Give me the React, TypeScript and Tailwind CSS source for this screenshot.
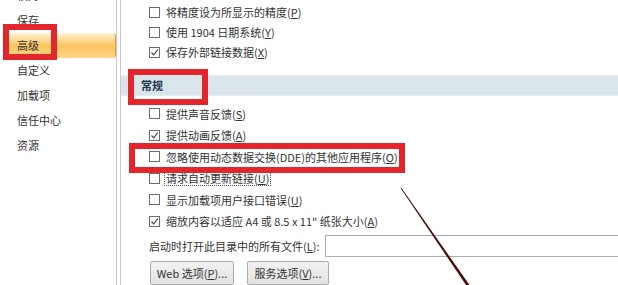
import React from "react";

const FONT = { fontFamily: '"Noto Sans CJK SC", "Noto Sans", sans-serif' };

function Box({ checked }: { checked?: boolean }) {
  return (
    <span className="relative inline-block w-[11px] h-[11px] border border-[#6d6d6d] bg-white shrink-0">
      {checked && (
        <svg className="absolute left-[0px] top-[0px]" width="9" height="9" viewBox="0 0 9 9">
          <path d="M1.5 4.5 L3.6 6.8 L7.8 1.6" fill="none" stroke="#4a4a4a" strokeWidth="1.2" />
        </svg>
      )}
    </span>
  );
}

function Row({
  checked,
  text,
  k,
  tail,
  h = "h-[20px]",
  focus,
}: {
  checked?: boolean;
  text: string;
  k: string;
  tail?: string;
  h?: string;
  focus?: boolean;
}) {
  return (
    <div className={`${h} flex items-center`}>
      <Box checked={checked} />
      <span
        className={`ml-[5px] px-[1px] leading-[14px] ${focus ? "outline outline-1 outline-dotted outline-[#555]" : ""}`}
      >
        {text}(<span className="underline">{k}</span>){tail}
      </span>
    </div>
  );
}

export default function App() {
  const nav = ["校对", "保存", "高级", "自定义", "加载项", "信任中心", "资源"];
  return (
    <div
      className="relative w-[618px] h-[285px] overflow-hidden bg-white text-[11px] text-[#333]"
      style={FONT}
    >
      <div className="flex h-full">
        {/* nav */}
        <div className="w-[117px] h-full border-r border-[#c9c9c9] bg-white shrink-0">
          <div className="mt-[-17.5px] flex flex-col">
            {nav.map((n) =>
              n === "高级" ? (
                <div
                  key={n}
                  className="h-[25px] ml-[6px] pl-[11px] flex items-center rounded-[3px] bg-gradient-to-b from-[#fff3d2] via-[#fbc45f] to-[#fcd688] border-r border-[#e0a040]"
                >
                  {n}
                </div>
              ) : (
                <div key={n} className="h-[25px] pl-[17px] flex items-center">
                  {n}
                </div>
              )
            )}
          </div>
        </div>
        <div className="w-[3px] shrink-0" />
        {/* content */}
        <div className="flex-1 h-full border-l border-[#c9c9c9] flex flex-col">
          <div className="pl-[28px] pt-[2px] flex flex-col">
            <Row text="将精度设为所显示的精度" k="P" />
            <Row text="使用 1904 日期系统" k="Y" />
            <Row checked text="保存外部链接数据" k="X" />
          </div>
          <div className="mt-[13px] h-[23px] bg-[#dbe5ec] border-t border-[#e6edf2] border-b border-[#c3ced6] flex items-center pl-[20px] font-bold text-[#1f3550]">
            常规
          </div>
          <div className="pl-[28px] pt-[7px] flex flex-col">
            <Row h="h-[21.5px]" text="提供声音反馈" k="S" />
            <Row h="h-[21.5px]" checked text="提供动画反馈" k="A" />
            <Row h="h-[21.5px]" text="忽略使用动态数据交换(DDE)的其他应用程序" k="O" />
            <Row h="h-[21.5px]" focus text="请求自动更新链接" k="U" />
            <Row h="h-[21.5px]" text="显示加载项用户接口错误" k="U" />
            <Row h="h-[21.5px]" checked text="缩放内容以适应 A4 或 8.5 x 11&quot; 纸张大小" k="A" />
          </div>
          <div className="pl-[28px] mt-[3px] h-[22px] flex items-center">
            <span className="w-[176px] shrink-0">
              启动时打开此目录中的所有文件(<span className="underline">L</span>):
            </span>
            <div className="flex-1 h-[22px] border border-[#abadb3] border-r-0 bg-white" />
          </div>
          <div className="pl-[29px] mt-[4px] flex gap-[13px]">
            <div className="w-[84px] h-[24px] border border-[#acacac] rounded-[2px] bg-gradient-to-b from-[#f2f2f2] to-[#e2e2e2] flex items-center justify-center text-[#333]">
              Web 选项(<span className="underline">P</span>)...
            </div>
            <div className="w-[82px] h-[24px] border border-[#acacac] rounded-[2px] bg-gradient-to-b from-[#f2f2f2] to-[#e2e2e2] flex items-center justify-center text-[#333]">
              服务选项(<span className="underline">V</span>)...
            </div>
          </div>
        </div>
      </div>

      {/* annotations */}
      <div className="absolute left-[3px] top-[24px] w-[54px] h-[36px] border-[6px] border-[#e3262c]" />
      <div className="absolute left-[128px] top-[69px] w-[80px] h-[36px] border-[6px] border-[#e3262c]" />
      <div className="absolute left-[129px] top-[143px] w-[276px] h-[30px] border-[6px] border-[#e3262c]" />
      <svg className="absolute left-0 top-0" width="618" height="285" viewBox="0 0 618 285">
        <polygon points="400.5,188 401.5,188 469.5,285 466,285" fill="#4d0c0c" />
      </svg>
    </div>
  );
}
